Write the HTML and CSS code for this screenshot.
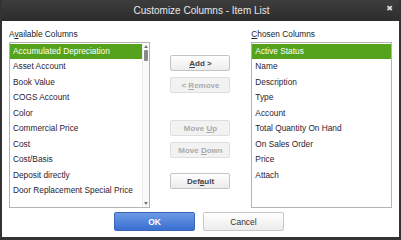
FILE: index.html
```html
<!DOCTYPE html>
<html>
<head>
<meta charset="utf-8">
<link rel="stylesheet" href="styles.css">
</head>
<body>
<div class="window">
  <div class="titlebar">
    <span class="title">Customize Columns - Item List</span>
    <span class="close">&#x2716;</span>
  </div>
  <div class="content">
    <div class="columns">
      <div class="col">
        <div class="label">A<u>v</u>ailable Columns</div>
        <div class="list left">
          <div class="rows">
            <div class="row sel">Accumulated Depreciation</div>
            <div class="row">Asset Account</div>
            <div class="row">Book Value</div>
            <div class="row">COGS Account</div>
            <div class="row">Color</div>
            <div class="row">Commercial Price</div>
            <div class="row">Cost</div>
            <div class="row">Cost/Basis</div>
            <div class="row">Deposit directly</div>
            <div class="row">Door Replacement Special Price</div>
          </div>
          <div class="scrollbar">
            <div class="arrow up"></div>
            <div class="thumb"></div>
            <div class="track"></div>
            <div class="arrow down"></div>
          </div>
        </div>
      </div>
      <div class="middle">
        <div class="btn add"><span><u>A</u>dd &gt;</span></div>
        <div class="btn disabled remove"><span>&lt; <u>R</u>emove</span></div>
        <div class="btn disabled moveup"><span>Move <u>U</u>p</span></div>
        <div class="btn disabled movedown"><span>Move <u>D</u>own</span></div>
        <div class="btn default"><span>Def<u>a</u>ult</span></div>
      </div>
      <div class="col">
        <div class="label"><u>C</u>hosen Columns</div>
        <div class="list right">
          <div class="rows">
            <div class="row sel">Active Status</div>
            <div class="row">Name</div>
            <div class="row">Description</div>
            <div class="row">Type</div>
            <div class="row">Account</div>
            <div class="row">Total Quantity On Hand</div>
            <div class="row">On Sales Order</div>
            <div class="row">Price</div>
            <div class="row">Attach</div>
          </div>
        </div>
      </div>
    </div>
    <div class="footer">
      <div class="fbtn ok">OK</div>
      <div class="fbtn cancel">Cancel</div>
    </div>
  </div>
</div>
</body>
</html>
```
FILE: styles.css
```css
html, body {
  margin: 0;
  padding: 0;
  background: #ffffff;
}
body {
  font-family: "Liberation Sans", Arial, sans-serif;
  width: 401px;
  height: 240px;
  overflow: hidden;
}
.window {
  width: 401px;
  height: 240px;
  box-sizing: border-box;
  background: #333333;
  padding: 0 2px 3px 2px;
  display: flex;
  flex-direction: column;
}
.titlebar {
  height: 21px;
  flex: none;
  display: flex;
  align-items: center;
  justify-content: center;
  position: relative;
  background: linear-gradient(#3d3d3d, #2c2c2c);
}
.title {
  color: #e8e8e8;
  font-size: 10px;
  margin-left: 2px;
}
.close {
  position: absolute;
  right: 6px;
  top: 4px;
  color: #dddddd;
  font-size: 8px;
  font-family: "DejaVu Sans", sans-serif;
  font-weight: bold;
}
.content {
  flex: 1;
  background: #ffffff;
  display: flex;
  flex-direction: column;
  padding: 7px 7px 0 7px;
}
.columns {
  display: flex;
}
.col {
  width: 141px;
  display: flex;
  flex-direction: column;
}
.label {
  font-size: 8.3px;
  color: #222222;
  height: 13px;
  line-height: 13px;
  margin-bottom: 1px;
}
.list {
  height: 166px;
  box-sizing: border-box;
  border: 1px solid #b4b4b4;
  display: flex;
  background: #ffffff;
}
.rows {
  flex: 1;
  padding-top: 0.5px;
}
.row {
  height: 15.5px;
  line-height: 15.5px;
  font-size: 8.3px;
  color: #2a2233;
  padding-left: 3px;
  white-space: nowrap;
}
.row.sel {
  background: #55a31c;
  color: #ffffff;
}
.scrollbar {
  width: 6px;
  display: flex;
  flex-direction: column;
  align-items: center;
  background: #fafafa;
  border-left: 1px solid #ececec;
}
.arrow {
  width: 0;
  height: 0;
  border-left: 2px solid transparent;
  border-right: 2px solid transparent;
  margin: 2px 0;
}
.arrow.up {
  border-bottom: 3px solid #777777;
}
.arrow.down {
  border-top: 3px solid #777777;
}
.thumb {
  width: 4px;
  height: 11px;
  background: #8a8a8a;
  border-radius: 1px;
}
.track {
  flex: 1;
}
.middle {
  width: 102px;
  display: flex;
  flex-direction: column;
  align-items: center;
  padding-top: 27px;
}
.btn {
  width: 60px;
  height: 16px;
  box-sizing: border-box;
  border: 1px solid #c4c4c4;
  border-radius: 2px;
  background: linear-gradient(#ffffff, #ececec);
  font-size: 8px;
  font-weight: bold;
  color: #444444;
  display: flex;
  align-items: center;
  justify-content: center;
  white-space: pre;
}
.btn.disabled {
  color: #ababab;
  border-color: #dedede;
  background: #f2f2f2;
}
.btn.remove { margin-top: 6px; }
.btn.moveup { margin-top: 27px; }
.btn.movedown { margin-top: 6px; }
.btn.default { margin-top: 15px; }
.footer {
  display: flex;
  justify-content: center;
  gap: 8px;
  margin-top: 4px;
  padding-right: 3px;
}
.fbtn {
  width: 81px;
  height: 19px;
  box-sizing: border-box;
  border-radius: 2px;
  display: flex;
  align-items: center;
  justify-content: center;
  font-size: 8.5px;
}
.ok {
  background: linear-gradient(#6b9ae6, #3b6fd0);
  border: 1px solid #3a66b8;
  color: #ffffff;
  font-weight: bold;
}
.cancel {
  background: linear-gradient(#ffffff, #ececec);
  border: 1px solid #c8c8c8;
  color: #333333;
}
```
